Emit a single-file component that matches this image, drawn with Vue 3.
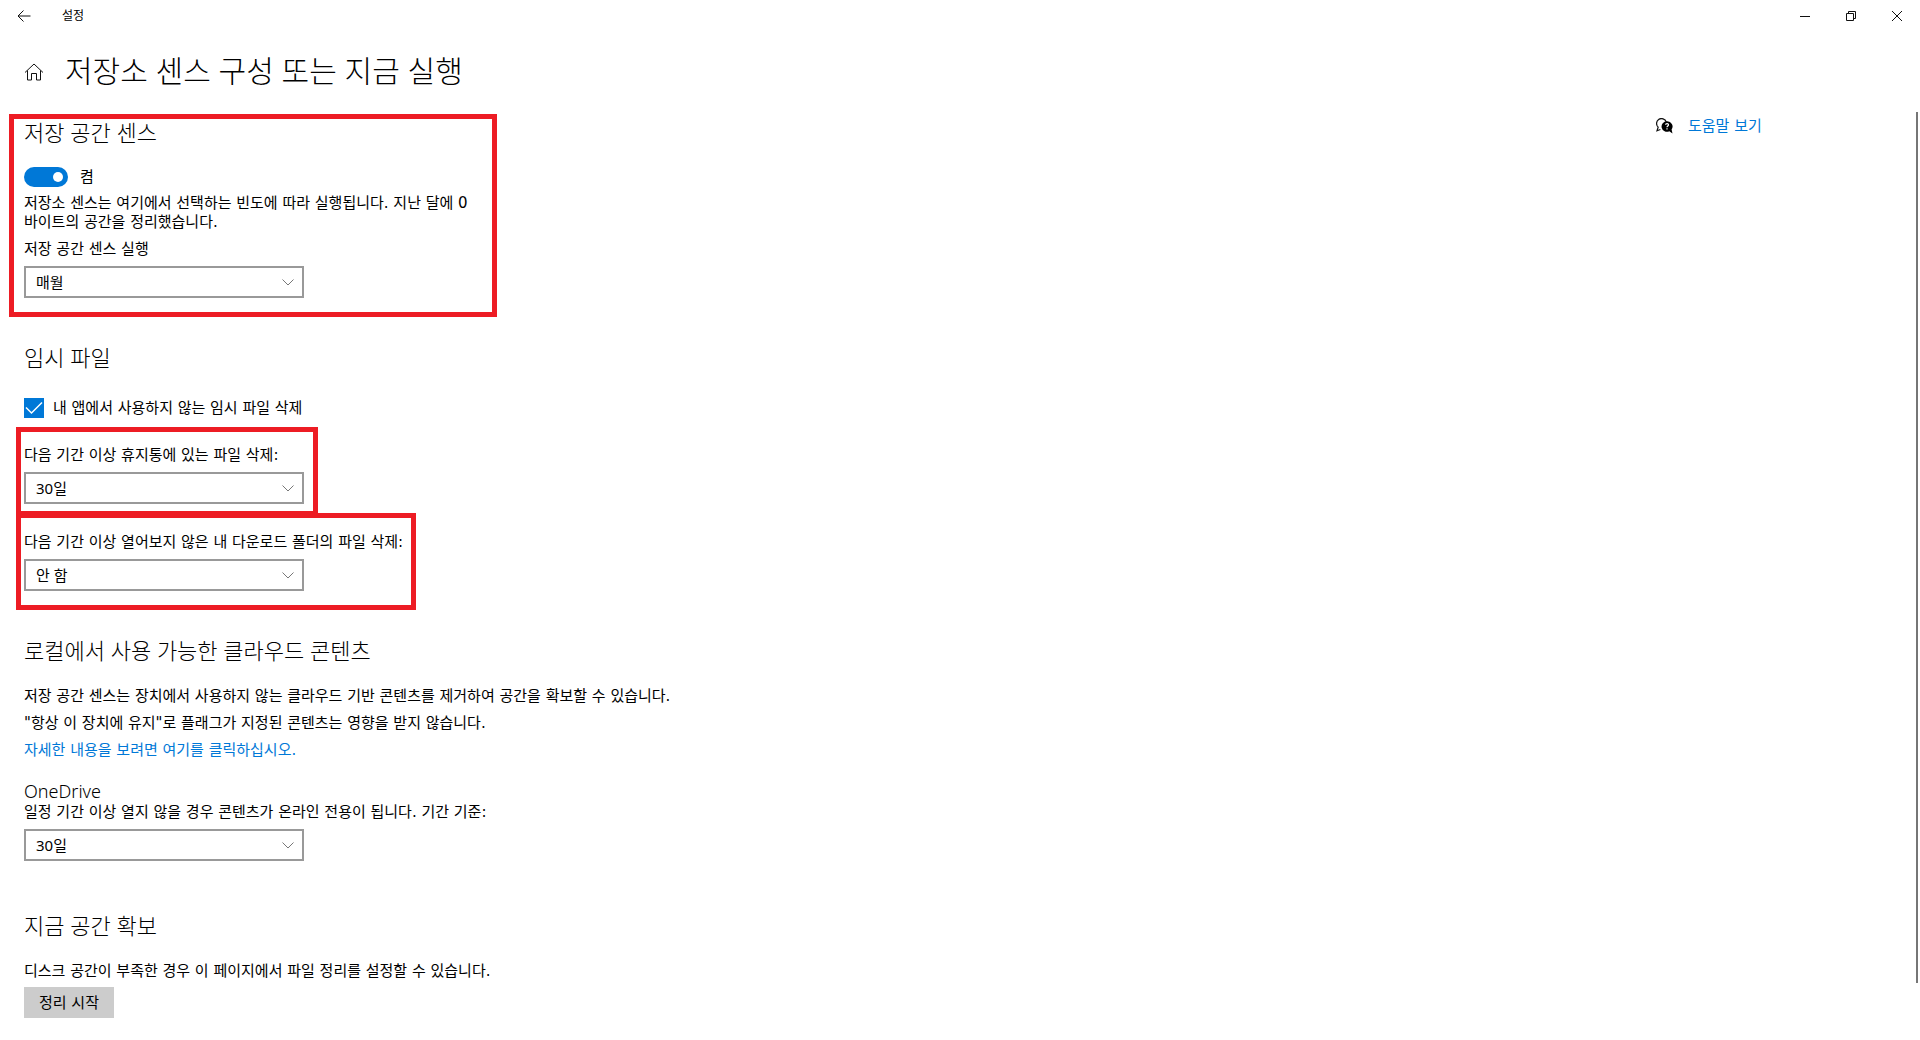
<script setup>
import { ref } from 'vue';

const senseOn = ref(true);
const deleteTemp = ref(true);
const runEvery = ref('매월');
const recycleDays = ref('30일');
const downloadDays = ref('안 함');
const oneDriveDays = ref('30일');

const runOptions = ['매일', '매주', '매월', '디스크 공간 부족 시'];
const dayOptions = ['안 함', '1일', '14일', '30일', '60일'];
</script>
<template>
  <div class="window">
    <header class="titlebar">
      <button class="back" aria-label="뒤로">
        <svg width="14" height="12" viewBox="0 0 14 12"><path d="M6.500 .5 1 6l5.500 5.500M1 6h12.500" /></svg>
      </button>
      <span class="app-name">설정</span>
      <div class="caption">
        <button aria-label="최소화">
          <svg width="10" height="10" viewBox="0 0 10 10"><path d="M0 5.500h10" /></svg>
        </button>
        <button aria-label="이전 크기로 복원">
          <svg width="10" height="10" viewBox="0 0 10 10"><path d="M.5 2.500h7v7h-7zM2.500 2.500v-2h7v7h-2" /></svg>
        </button>
        <button aria-label="닫기">
          <svg width="10" height="10" viewBox="0 0 10 10"><path d="M0 0l10 10M10 0L0 10" /></svg>
        </button>
      </div>
    </header>
    <div class="page-head">
      <button class="home" aria-label="홈">
        <svg width="20" height="18" viewBox="0 0 20 18"><path d="M1 9.500 10 1l9 8.500M3.500 7.500v9.500h4v-6.500h5v6.500h4V7.500" /></svg>
      </button>
      <h1>저장소 센스 구성 또는 지금 실행</h1>
    </div>
    <div class="body">
      <main>
        <section class="marked sense">
          <h2>저장 공간 센스</h2>
          <label class="toggle">
            <input type="checkbox" role="switch" v-model="senseOn" />
            <span>{{ senseOn ? '켬' : '끔' }}</span>
          </label>
          <p class="status">저장소 센스는 여기에서 선택하는 빈도에 따라 실행됩니다. 지난 달에 0<br />바이트의 공간을 정리했습니다.</p>
          <label class="caption-text" for="run">저장 공간 센스 실행</label>
          <div class="combo">
            <select id="run" v-model="runEvery">
              <option v-for="o in runOptions" :key="o">{{ o }}</option>
            </select>
            <svg width="12" height="7" viewBox="0 0 12 7"><path d="M.5 .5 6 6 11.500 .5" /></svg>
          </div>
        </section>

        <section class="plain temp">
          <h2>임시 파일</h2>
          <label class="check">
            <span class="box">
              <input type="checkbox" v-model="deleteTemp" />
              <svg v-if="deleteTemp" width="20" height="20" viewBox="0 0 20 20"><path d="M2 9.500l5.500 5.500L18 4.500" /></svg>
            </span>
            <span>내 앱에서 사용하지 않는 임시 파일 삭제</span>
          </label>
        </section>

        <section class="marked recycle">
          <label class="caption-text" for="recycle">다음 기간 이상 휴지통에 있는 파일 삭제:</label>
          <div class="combo">
            <select id="recycle" v-model="recycleDays">
              <option v-for="o in dayOptions" :key="o">{{ o }}</option>
            </select>
            <svg width="12" height="7" viewBox="0 0 12 7"><path d="M.5 .5 6 6 11.500 .5" /></svg>
          </div>
        </section>

        <section class="marked downloads">
          <label class="caption-text" for="downloads">다음 기간 이상 열어보지 않은 내 다운로드 폴더의 파일 삭제:</label>
          <div class="combo">
            <select id="downloads" v-model="downloadDays">
              <option v-for="o in dayOptions" :key="o">{{ o }}</option>
            </select>
            <svg width="12" height="7" viewBox="0 0 12 7"><path d="M.5 .5 6 6 11.500 .5" /></svg>
          </div>
        </section>

        <section class="plain cloud">
          <h2>로컬에서 사용 가능한 클라우드 콘텐츠</h2>
          <p>저장 공간 센스는 장치에서 사용하지 않는 클라우드 기반 콘텐츠를 제거하여 공간을 확보할 수 있습니다.</p>
          <p>"항상 이 장치에 유지"로 플래그가 지정된 콘텐츠는 영향을 받지 않습니다.</p>
          <p><a href="#">자세한 내용을 보려면 여기를 클릭하십시오.</a></p>
          <h3>OneDrive</h3>
          <label class="caption-text" for="onedrive">일정 기간 이상 열지 않을 경우 콘텐츠가 온라인 전용이 됩니다. 기간 기준:</label>
          <div class="combo">
            <select id="onedrive" v-model="oneDriveDays">
              <option v-for="o in dayOptions" :key="o">{{ o }}</option>
            </select>
            <svg width="12" height="7" viewBox="0 0 12 7"><path d="M.5 .5 6 6 11.500 .5" /></svg>
          </div>
        </section>

        <section class="plain free">
          <h2>지금 공간 확보</h2>
          <p>디스크 공간이 부족한 경우 이 페이지에서 파일 정리를 설정할 수 있습니다.</p>
          <button class="clean">정리 시작</button>
        </section>
      </main>
      <aside>
        <svg width="17" height="17" viewBox="0 0 17 17">
          <path class="bubble" d="M2.600 9.600A5 5 0 1 1 10.300 4M2.200 9l-1.200 3.700 3.400-1.200" />
          <path class="solid" d="M11 3.200a5.300 5.300 0 1 0 2.300 10l3.200 2.300-.9-4A5.300 5.300 0 0 0 11 3.200z" />
          <path class="mark" d="M9.500 6.800c.2-1.600 3.200-1.500 3 .1-.1 1-1.500 1.100-1.500 2.300M11 10.300v1.200" />
        </svg>
        <a href="#">도움말 보기</a>
      </aside>
      <div class="scroll-thumb"></div>
    </div>
  </div>
</template>
<style>
  body {
    margin: 0;
    background: #fff;
  }
</style>
<style scoped>
  .window {
    display: flex;
    flex-direction: column;
    min-height: 100vh;
    color: #000;
    font-family: "DejaVu Sans", "Noto Sans CJK KR", sans-serif;
    font-size: 15px;
    line-height: 20px;
  }
  button, select {
    font: inherit;
    color: inherit;
  }
  h1, h2, h3, select {
    font-family: "Noto Sans", "Noto Sans CJK KR", sans-serif;
  }
  h1, h2, h3, p {
    margin: 0;
  }
  a {
    color: #0078d7;
    text-decoration: none;
  }
  svg {
    fill: none;
    stroke: #111;
  }
  .titlebar {
    display: flex;
    align-items: center;
    height: 32px;
  }
  .titlebar button, .home {
    display: flex;
    align-items: center;
    justify-content: center;
    padding: 0;
    border: 0;
    background: none;
  }
  .back {
    width: 48px;
    height: 32px;
  }
  .app-name {
    margin-left: 14px;
    font-size: 12px;
  }
  .caption {
    display: flex;
    margin-left: auto;
  }
  .caption button {
    width: 46px;
    height: 32px;
  }
  .page-head {
    display: flex;
    align-items: center;
    gap: 21px;
    height: 80px;
    padding-left: 24px;
  }
  h1 {
    padding-bottom: 2px;
    font-size: 30px;
    font-weight: 300;
    line-height: 40px;
  }
  h2 {
    font-size: 22px;
    font-weight: 300;
    line-height: 26px;
  }
  h3 {
    margin-top: 20px;
    font-size: 18px;
    font-weight: 350;
    line-height: 22px;
  }
  .body {
    display: flex;
    flex: 1;
  }
  main {
    display: flex;
    flex: 1;
    flex-direction: column;
    align-items: flex-start;
    padding: 2px 0 22px;
  }
  .plain {
    margin-left: 24px;
  }
  .marked {
    box-sizing: border-box;
    border: 5px solid #ed1c24;
  }
  .sense {
    width: 488px;
    margin-left: 9px;
    padding: 0 10px 14px;
  }
  .recycle {
    width: 302px;
    margin: 9px 0 0 16px;
    padding: 13px 3px 7px;
  }
  .downloads {
    width: 400px;
    margin: -3px 0 0 16px;
    padding: 14px 0 14px 3px;
    white-space: nowrap;
  }
  .toggle {
    display: flex;
    align-items: center;
    gap: 12px;
    height: 20px;
    margin-top: 22px;
  }
  .toggle input {
    display: flex;
    align-items: center;
    box-sizing: border-box;
    width: 44px;
    height: 20px;
    margin: 0;
    padding: 0 5px;
    border-radius: 10px;
    background: #999;
    appearance: none;
  }
  .toggle input::before {
    content: "";
    width: 10px;
    height: 10px;
    border-radius: 50%;
    background: #fff;
  }
  .toggle input:checked {
    justify-content: flex-end;
    background: #0078d7;
  }
  .status {
    margin-top: 7px;
    line-height: 19px;
    white-space: nowrap;
  }
  .caption-text {
    display: block;
  }
  .status + .caption-text {
    margin-top: 7px;
  }
  .combo {
    display: grid;
    align-items: center;
    width: 280px;
    margin-top: 7px;
  }
  .combo select, .combo svg {
    grid-area: 1 / 1;
  }
  .combo select {
    width: 100%;
    height: 32px;
    padding: 0 10px;
    border: 2px solid #999;
    border-radius: 0;
    background: #fff;
    appearance: none;
  }
  .combo svg {
    justify-self: end;
    margin-right: 10px;
    stroke: #777;
    pointer-events: none;
  }
  .temp, .cloud {
    margin-top: 27px;
  }
  .check {
    display: flex;
    align-items: center;
    gap: 9px;
    margin-top: 28px;
  }
  .box {
    display: grid;
  }
  .box input, .box svg {
    grid-area: 1 / 1;
  }
  .box input {
    width: 20px;
    height: 20px;
    margin: 0;
    border: 2px solid #333;
    appearance: none;
  }
  .box input:checked {
    border: 0;
    background: #0078d7;
  }
  .box svg {
    stroke: #fff;
    stroke-width: 1.5;
    pointer-events: none;
  }
  h2 + p {
    margin-top: 23px;
  }
  p + p {
    margin-top: 7px;
  }
  .free {
    margin-top: 51px;
  }
  .clean {
    display: block;
    height: 31px;
    margin-top: 6px;
    padding: 0 15px;
    border: 0;
    background: #ccc;
  }
  aside {
    display: flex;
    align-items: center;
    align-self: flex-start;
    gap: 15px;
    width: 260px;
    padding-top: 4px;
  }
  .bubble {
    stroke-width: 1.2;
  }
  .solid {
    fill: #000;
    stroke: none;
  }
  .mark {
    stroke: #fff;
    stroke-width: 1.2;
  }
  .scroll-thumb {
    width: 2px;
    height: 871px;
    margin-right: 2px;
    background: #767676;
  }
</style>
